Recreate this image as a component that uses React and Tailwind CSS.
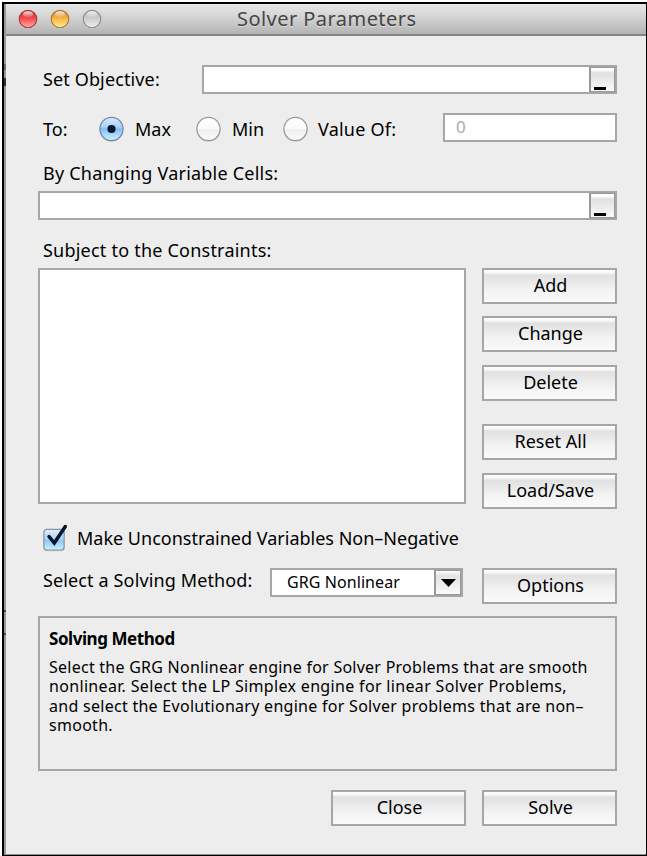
import React from "react";

function Label({ className = "", children }) {
  return <span className={`block whitespace-nowrap leading-[24px] ${className}`}>{children}</span>;
}

function PushButton({ className = "", children }) {
  return (
    <button
      className={`flex h-[36px] w-[135px] shrink-0 items-center justify-center border-2 border-[#a6a6a6] bg-[linear-gradient(to_bottom,#ffffff_0,#f6f6f6_3px,#e1e1e1_5px,#e6e6e6_10px,#f3f3f3_20px,#fafafa_100%)] pb-[2px] pl-[2px] text-[18px] whitespace-nowrap ${className}`}
    >
      {children}
    </button>
  );
}

function RangeField({ className }) {
  return (
    <div className={`flex h-[29px] justify-end border-2 border-[#a6a6a6] bg-white ${className}`}>
      <div className="flex h-[25px] w-[26px] items-end border-t border-r border-b border-l-2 border-[#999] bg-[linear-gradient(to_bottom,#fff_0,#fff_2px,#e0e0e0_5px,#fafafa_100%)] pb-px pl-[3px]">
        <div className="h-[3px] w-[12px] bg-black" />
      </div>
    </div>
  );
}

function Radio({ checked }) {
  return (
    <svg width="26" height="26" viewBox="0 0 26 26" className="block shrink-0">
      <defs>
        <linearGradient id="radioOn" x1="0" y1="0" x2="0" y2="1">
          <stop offset="0" stopColor="#d9ebfc" />
          <stop offset=".42" stopColor="#a7d2f8" />
          <stop offset=".5" stopColor="#83bef4" />
          <stop offset="1" stopColor="#ccf6ff" />
        </linearGradient>
        <linearGradient id="radioOff" x1="0" y1="0" x2="0" y2="1">
          <stop offset="0" stopColor="#fff" />
          <stop offset=".48" stopColor="#fbfbfb" />
          <stop offset=".54" stopColor="#eee" />
          <stop offset="1" stopColor="#fcfcfc" />
        </linearGradient>
      </defs>
      <circle cx="12.5" cy="13.8" r="12" fill="#cfcfcf" />
      <circle cx="12.5" cy="13" r="11.6" fill={checked ? "url(#radioOn)" : "url(#radioOff)"} stroke={checked ? "#7486a3" : "#999"} strokeWidth="1.2" />
      {checked && <circle cx="12.5" cy="13" r="4.1" fill="#04172f" />}
    </svg>
  );
}

function Light({ id, edge, top, mid, low }) {
  return (
    <svg width="20" height="20" viewBox="0 0 20 20" className="block">
      <defs>
        <linearGradient id={id} x1="0" y1="0" x2="0" y2="1">
          <stop offset="0" stopColor={top} />
          <stop offset=".45" stopColor={mid} />
          <stop offset="1" stopColor={low} />
        </linearGradient>
        <linearGradient id={id + "Shine"} x1="0" y1="0" x2="0" y2="1">
          <stop offset="0" stopColor="#fff" stopOpacity=".85" />
          <stop offset="1" stopColor="#fff" stopOpacity=".1" />
        </linearGradient>
      </defs>
      <circle cx="10" cy="10.6" r="9.2" fill="#e9e9e9" />
      <circle cx="10" cy="10" r="8.8" fill={`url(#${id})`} stroke={edge} strokeWidth="1.1" />
      <ellipse cx="10" cy="5.2" rx="5" ry="3" fill={`url(#${id}Shine)`} />
    </svg>
  );
}

export default function App() {
  return (
    <div className="h-[856px] w-[647px] overflow-hidden bg-white pt-[2px] pl-[2px] font-['Noto_Sans','Open_Sans',sans-serif] text-[18px] text-black">
      <div className="flex h-[854px] w-[645px] border-t-2 border-r border-b border-l-2 border-black bg-[#999]">
        <div className="flex w-[2px] shrink-0 flex-col bg-[#999]">
          <div className="mt-[60px] h-[6px] bg-[#5d7180]" />
          <div className="mt-[8px] h-[8px] bg-[#333]" />
          <div className="mt-[524px] h-[2px] bg-[#27498f]" />
          <div className="mt-[21px] h-[2px] bg-[#27498f]" />
        </div>
        <div className="flex w-[640px] flex-col border-b border-[#8d8d8d] bg-[#ededed]">
          <header className="flex h-[32px] shrink-0 items-center border-b-2 border-[#858585] bg-[linear-gradient(to_bottom,#e8e8e8,#d2d2d2_45%,#b4b4b4)] pl-[12px]">
            <div className="flex gap-[12px] pb-px">
              <Light id="red" edge="#a33a3b" top="#b8383a" mid="#f5474a" low="#ffb0aa" />
              <Light id="amber" edge="#a77431" top="#c27c23" mid="#f7b042" low="#fff29a" />
              <Light id="gray" edge="#898989" top="#b0b0b0" mid="#cdcdcd" low="#ededed" />
            </div>
            <h1 className="ml-[135px] text-[20px] leading-[28px] tracking-[0.45px] whitespace-nowrap text-[#444] [text-shadow:0_1px_0_#ddd]">Solver Parameters</h1>
          </header>

          <main className="flex flex-col pr-[29px] pl-[32px]">
            <div className="mt-[29px] flex h-[29px] items-center justify-between pl-[5px]">
              <Label className="pb-[2px] tracking-[0.13px]">Set Objective:</Label>
              <RangeField className="w-[415px]" />
            </div>

            <div className="mt-[19px] flex h-[32px] items-center pl-[5px]">
              <Label className="w-[56px]">To:</Label>
              <Radio checked />
              <Label className="ml-[10px] w-[61px]">Max</Label>
              <Radio />
              <Label className="ml-[10px] w-[51px]">Min</Label>
              <Radio />
              <Label className="ml-[9px] tracking-[0.22px]">Value Of:</Label>
              <div className="mb-[3px] ml-auto h-[29px] w-[174px] border-2 border-[#a6a6a6] bg-white pl-[11px] text-[17px] leading-[24px] text-[#aaa]">0</div>
            </div>

            <Label className="mt-[16px] pl-[5px] tracking-[0.22px]">By Changing Variable Cells:</Label>
            <RangeField className="mt-[6px] w-full" />

            <Label className="mt-[18px] pl-[5px] tracking-[0.22px]">Subject to the Constraints:</Label>
            <div className="mt-[6px] flex h-[241px] justify-between">
              <div className="h-[236px] w-[428px] border-2 border-[#a6a6a6] bg-white" />
              <div className="flex flex-col">
                <PushButton>Add</PushButton>
                <PushButton className="mt-[12px]">Change</PushButton>
                <PushButton className="mt-[13px]">Delete</PushButton>
                <PushButton className="mt-[23px]">Reset All</PushButton>
                <PushButton className="mt-[13px]">Load/Save</PushButton>
              </div>
            </div>

            <div className="mt-[15px] flex h-[30px] items-center pl-[5px]">
              <svg width="25" height="30" viewBox="0 0 25 30" className="block shrink-0">
                <defs>
                  <linearGradient id="checkOn" x1="0" y1="0" x2="0" y2="1">
                    <stop offset="0" stopColor="#e1eefb" />
                    <stop offset=".45" stopColor="#b0d5f7" />
                    <stop offset=".55" stopColor="#91c8f6" />
                    <stop offset="1" stopColor="#c9f3ff" />
                  </linearGradient>
                </defs>
                <rect x=".6" y="6" width="21" height="21.3" rx="3.5" fill="#c8c8c8" />
                <rect x=".9" y="5.4" width="20.2" height="20.6" rx="3" fill="url(#checkOn)" stroke="#8592a7" strokeWidth="1.2" />
                <path d="M6 12.5 L11.3 19 L22.3 2.5" fill="none" stroke="#04172f" strokeWidth="3.5" strokeLinecap="round" strokeLinejoin="miter" />
              </svg>
              <Label className="ml-[9px] pb-[2px]">Make Unconstrained Variables Non–Negative</Label>
            </div>

            <div className="mt-[14px] flex h-[36px] items-start">
              <Label className="w-[232px] pl-[5px] leading-[22px] tracking-[0.13px]">Select a Solving Method:</Label>
              <div className="flex h-[29px] w-[193px] border-2 border-[#a6a6a6] bg-white">
                <Label className="flex-1 pl-[15px] text-[16px] leading-[22px] tracking-[0.08px]">GRG Nonlinear</Label>
                <div className="flex w-[27px] items-center justify-center border-t border-r border-b border-l-2 border-[#999] bg-[linear-gradient(to_bottom,#fff,#e3e3e3_5px,#fafafa)]">
                  <svg width="15" height="8" viewBox="0 0 15 8"><path d="M0 0H15L7.5 8Z" fill="#000" /></svg>
                </div>
              </div>
              <PushButton className="ml-auto">Options</PushButton>
            </div>

            <section className="mt-[12px] h-[155px] border-2 border-[#a6a6a6] pt-[9px] pl-[9px]">
              <h2 className="text-[17px] leading-[24px] font-bold tracking-[-0.45px] whitespace-nowrap">Solving Method</h2>
              <p className="mt-[7px] text-[16px] leading-[19.3px] whitespace-nowrap">
                <span className="block tracking-[0.25px]">Select the GRG Nonlinear engine for Solver Problems that are smooth</span>
                <span className="block tracking-[0.33px]">nonlinear. Select the LP Simplex engine for linear Solver Problems,</span>
                <span className="block tracking-[0.28px]">and select the Evolutionary engine for Solver problems that are non–</span>
                <span className="block tracking-[0.28px]">smooth.</span>
              </p>
            </section>

            <div className="mt-[19px] flex justify-end gap-[16px]">
              <PushButton>Close</PushButton>
              <PushButton>Solve</PushButton>
            </div>
          </main>
        </div>
      </div>
    </div>
  );
}
